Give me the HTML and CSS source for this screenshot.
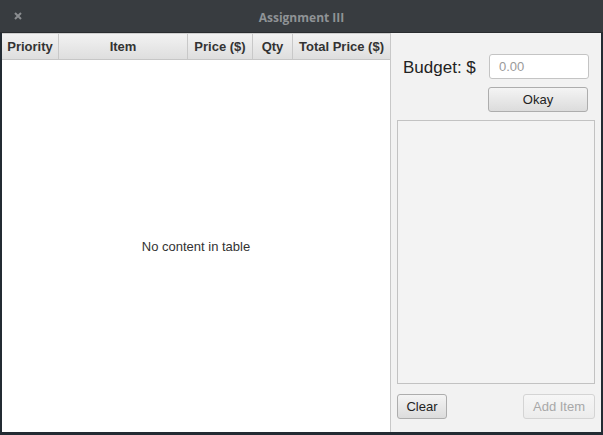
FILE: index.html
```html
<!DOCTYPE html>
<html>
<head>
<meta charset="utf-8">
<link rel="stylesheet" href="styles.css">
</head>
<body>
<div class="screen">
  <div class="titlebar">
    <svg class="close" width="8" height="8" viewBox="0 0 8 8"><path d="M1 1L7 7M7 1L1 7" stroke="#8a8d90" stroke-width="2"/></svg>
    <span class="title">Assignment III</span>
  </div>
  <div class="window">
    <div class="table">
      <div class="thead">
        <div class="th c1">Priority</div>
        <div class="th c2">Item</div>
        <div class="th c3">Price ($)</div>
        <div class="th c4">Qty</div>
        <div class="th c5">Total Price ($)</div>
      </div>
      <div class="tbody">No content in table</div>
    </div>
    <div class="side">
      <div class="budget-row">
        <span class="budget-label">Budget: $</span>
        <div class="field">0.00</div>
      </div>
      <div class="okay-row"><button class="btn okay">Okay</button></div>
      <div class="listbox"></div>
      <div class="bottom-row">
        <button class="btn clear">Clear</button>
        <button class="btn disabled">Add Item</button>
      </div>
    </div>
  </div>
</div>
</body>
</html>
```
FILE: styles.css
```css
* { box-sizing: border-box; }
html, body { margin: 0; padding: 0; }
body {
  width: 603px; height: 435px; overflow: hidden;
  background: #1b1f2a;
  font-family: "Liberation Sans", Arial, sans-serif;
}
.screen {
  width: 603px; height: 435px;
  display: flex; flex-direction: column;
  padding: 0 2px 3px 2px;
  background: #232b33;
}
.titlebar {
  height: 33px; flex: none;
  background: #383c40;
  margin: 0 -2px;
  padding: 0 2px;
  display: flex; align-items: center;
  position: relative;
  border-bottom: 1px solid #2a2d30;
}
.close { margin-left: 12px; margin-top: 0; }
.title {
  position: absolute; left: 0; right: 0; text-align: center;
  color: #8f9396; font-size: 12px; font-weight: bold;
  font-family: "Open Sans", "DejaVu Sans", sans-serif;
  top: 9px;
}
.window {
  flex: 1; display: flex; background: #f2f2f2;
}
.table {
  width: 389px; display: flex; flex-direction: column;
  border-right: 1px solid #c8c8c8;
  background: #fff;
}
.thead {
  display: flex; height: 27px; flex: none;
  background: linear-gradient(#f2f2f2, #dedede);
  border-bottom: 1px solid #c6c6c6;
  border-top: 1px solid #cfcfcf;
}
.th {
  font-size: 13px; font-weight: bold; color: #333;
  display: flex; align-items: center; justify-content: center;
  border-right: 1px solid #c8c8c8;
}
.c1 { width: 57px; }
.c2 { width: 129px; }
.c3 { width: 65px; }
.c4 { width: 40px; }
.c5 { flex: 1; border-right: none; }
.tbody {
  flex: 1; display: flex; align-items: center; justify-content: center;
  font-size: 13px; color: #333;
}
.side {
  flex: 1; display: flex; flex-direction: column;
  padding: 21px 6px 13px 6px;
}
.budget-row { display: flex; align-items: center; height: 25px; }
.budget-label {
  font-size: 17px; color: #222; margin-left: 6px; width: 86px;
  margin-top: 2px;
}
.field {
  width: 100px; height: 25px; background: #fff;
  border: 1px solid #c4c4c4; border-radius: 3px;
  font-size: 13px; color: #9a9a9a; padding: 4px 0 0 9px;
}
.okay-row { display: flex; justify-content: flex-end; margin-top: 8px; padding-right: 7px; }
.btn {
  font-family: "Liberation Sans", Arial, sans-serif;
  font-size: 13px; color: #222;
  height: 25px; padding: 0 9px;
  background: linear-gradient(#f4f4f4, #dcdcdc);
  border: 1px solid #adadad; border-radius: 3px;
}
.okay { width: 100px; }
.clear { width: 50px; padding: 0; }
.listbox {
  flex: 1; margin-top: 8px;
  border: 1px solid #c2c2c2; background: #f3f3f3;
}
.bottom-row {
  display: flex; justify-content: space-between; margin-top: 10px;
}
.btn.disabled {
  color: #a8a8a8; border-color: #d4d4d4;
  background: linear-gradient(#f6f6f6, #ececec);
  width: 72px; padding: 0;
}
```
